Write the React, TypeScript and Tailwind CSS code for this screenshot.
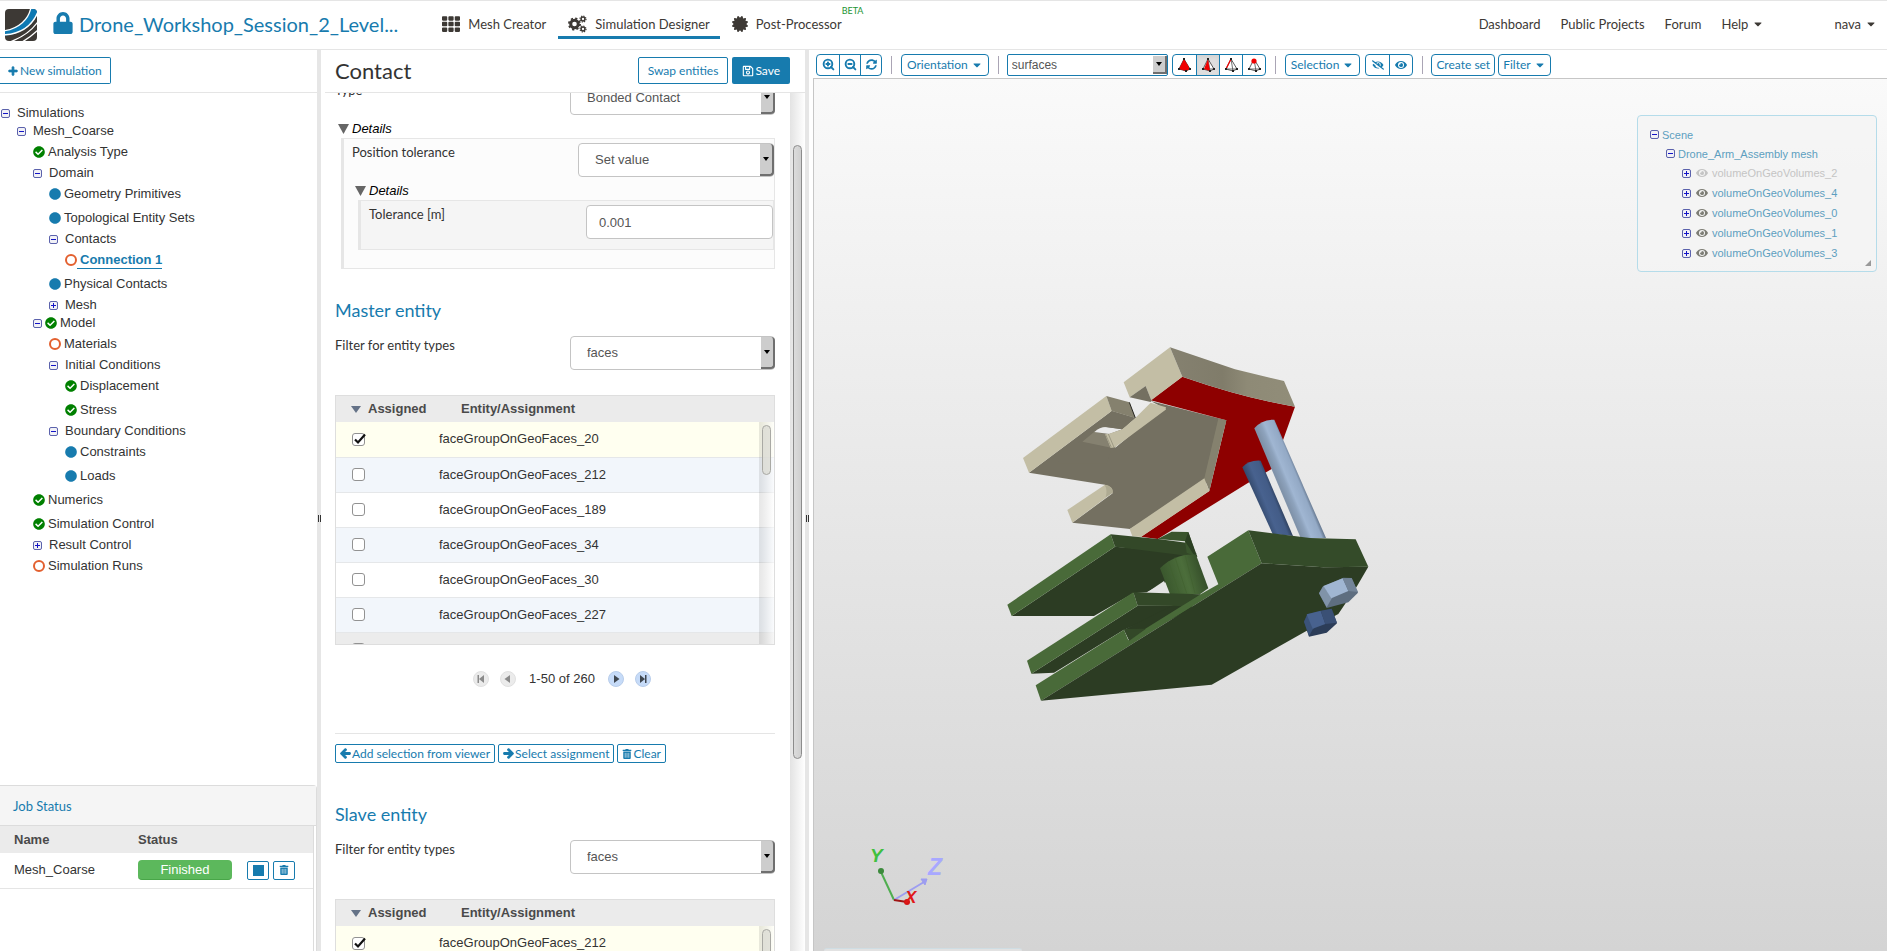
import { useState } from "react";
import type { ReactNode } from "react";
import clsx from "clsx";
import {
  FaArrowLeft,
  FaArrowRight,
  FaCaretDown,
  FaCertificate,
  FaCheckCircle,
  FaCircle,
  FaEye,
  FaEyeSlash,
  FaLock,
  FaPlus,
  FaRegSave,
  FaSyncAlt,
  FaTh,
  FaTrashAlt,
} from "react-icons/fa";
import { ZoomIn, ZoomOut } from "lucide-react";

type Status = "done" | "info" | "open";

type TreeItem = {
  label: string;
  level: number;
  toggle?: "open" | "closed";
  status?: Status;
  active?: boolean;
};

const tree: TreeItem[] = [
  { label: "Simulations", level: 0, toggle: "open" },
  { label: "Mesh_Coarse", level: 1, toggle: "open" },
  { label: "Analysis Type", level: 2, status: "done" },
  { label: "Domain", level: 2, toggle: "open" },
  { label: "Geometry Primitives", level: 3, status: "info" },
  { label: "Topological Entity Sets", level: 3, status: "info" },
  { label: "Contacts", level: 3, toggle: "open" },
  { label: "Connection 1", level: 4, status: "open", active: true },
  { label: "Physical Contacts", level: 3, status: "info" },
  { label: "Mesh", level: 3, toggle: "closed" },
  { label: "Model", level: 2, toggle: "open", status: "done" },
  { label: "Materials", level: 3, status: "open" },
  { label: "Initial Conditions", level: 3, toggle: "open" },
  { label: "Displacement", level: 4, status: "done" },
  { label: "Stress", level: 4, status: "done" },
  { label: "Boundary Conditions", level: 3, toggle: "open" },
  { label: "Constraints", level: 4, status: "info" },
  { label: "Loads", level: 4, status: "info" },
  { label: "Numerics", level: 2, status: "done" },
  { label: "Simulation Control", level: 2, status: "done" },
  { label: "Result Control", level: 2, toggle: "closed" },
  { label: "Simulation Runs", level: 2, status: "open" },
];

const indent = ["pl-px", "pl-[17px]", "pl-[33px]", "pl-[49px]", "pl-[65px]"];

const volumes = [
  { name: "volumeOnGeoVolumes_2", hidden: true },
  { name: "volumeOnGeoVolumes_4" },
  { name: "volumeOnGeoVolumes_0" },
  { name: "volumeOnGeoVolumes_1" },
  { name: "volumeOnGeoVolumes_3" },
];

const masterFaces = ["20", "212", "189", "34", "30", "227"];
const slaveFaces = ["212", "20", "189", "34", "30", "227"];

function ToggleBox({ state }: { state: "open" | "closed" }) {
  return (
    <svg viewBox="0 0 9 9" className="size-[9px] shrink-0" aria-hidden="true">
      <rect x="0.5" y="0.5" width="8" height="8" rx="1.5" fill="#f1f1f6" stroke="#5b62ac" />
      <path d="M2 4.5h5" stroke="#1414c8" />
      {state === "closed" && <path d="M4.5 2v5" stroke="#1414c8" />}
    </svg>
  );
}

function StatusIcon({ status }: { status: Status }) {
  if (status === "done") return <FaCheckCircle className="size-3 shrink-0 text-[#008000]" />;
  if (status === "info") return <FaCircle className="size-3 shrink-0 text-[#177bae]" />;
  return <span className="size-3 shrink-0 rounded-full border-2 border-[#e3602f]" />;
}

function TreeRow({ item }: { item: TreeItem }) {
  return (
    <li
      className={clsx(
        "flex items-center whitespace-nowrap",
        indent[item.level],
        item.toggle ? "h-[18px]" : "h-6"
      )}
    >
      {item.toggle && <ToggleBox state={item.toggle} />}
      {item.status && (
        <span className={clsx("flex", item.toggle && "ml-[3px]")}>
          <StatusIcon status={item.status} />
        </span>
      )}
      <a
        href="#"
        className={clsx(
          "leading-4",
          item.active && "border-b border-[#177bae] pl-[3px] font-bold text-[#177bae]",
          !item.active && (item.status ? "ml-[3px]" : "ml-[7px]")
        )}
      >
        {item.label}
      </a>
    </li>
  );
}

function Logo() {
  return (
    <svg viewBox="0 0 32 32" className="h-8 w-8" aria-label="SimScale">
      <defs>
        <clipPath id="logo-clip">
          <rect width="32" height="32" rx="4" />
        </clipPath>
      </defs>
      <g clipPath="url(#logo-clip)">
        <rect width="32" height="32" fill="#3d3935" />
        <path d="M26-2C24 10 14 20-2 22V27C18 25 29 15 34 2V-2Z" fill="#0d79b3" />
        <path d="M26-2C24 10 14 20-2 22" fill="none" stroke="#fff" strokeWidth="1.3" />
        <path d="M34 0C29 15 18 25-2 26" fill="none" stroke="#fff" strokeWidth="1.5" />
        <path d="M34 11C28 21 18 28 5 33" fill="none" stroke="#fff" strokeWidth="1.3" />
        <path d="M34 20C29 25 24 29 17 33" fill="none" stroke="#fff" strokeWidth="1.3" />
      </g>
    </svg>
  );
}

function GearsIcon({ className }: { className: string }) {
  return (
    <svg viewBox="0 0 19 18" className={className} fill="none" stroke="currentColor" aria-hidden="true">
      <circle cx="6.5" cy="9" r="3.800" strokeWidth="3" />
      <circle cx="6.5" cy="9" r="5.600" strokeWidth="1.800" strokeDasharray="2.200" />
      <circle cx="15" cy="4" r="1.900" strokeWidth="1.500" />
      <circle cx="15" cy="4" r="3" strokeWidth="1.200" strokeDasharray="1.180" />
      <circle cx="15" cy="14" r="1.900" strokeWidth="1.500" />
      <circle cx="15" cy="14" r="3" strokeWidth="1.200" strokeDasharray="1.180" />
    </svg>
  );
}

const tabLink = "flex h-8 items-center border-b-3 pt-1";

function Header() {
  return (
    <header className="flex h-[50px] shrink-0 items-center border-y border-[#e5e5e5] pr-2.5 pl-[5px] font-[Lato,sans-serif] text-[#3d3935]">
      <a href="#">
        <Logo />
      </a>
      <FaLock className="-mt-1 ml-4 h-[22px] w-5 text-[#177bae]" />
      <h1 className="-mt-0.5 ml-1.5 text-xl leading-7 text-[#177bae]">Drone_Workshop_Session_2_Level...</h1>
      <nav className="-mt-1 ml-9 flex h-8 items-center leading-5">
        <a href="#" className={clsx(tabLink, "border-transparent px-2")}>
          <FaTh className="mr-2 size-[18px]" />
          Mesh Creator
        </a>
        <a href="#" className={clsx(tabLink, "ml-1 border-[#177bae] px-2.5")}>
          <GearsIcon className="mr-2 h-[18px] w-[19px]" />
          Simulation Designer
        </a>
        <a href="#" className={clsx(tabLink, "relative ml-0.5 border-transparent px-2.5")}>
          <FaCertificate className="mr-2 size-4" />
          Post-Processor
          <sup className="absolute -top-0.5 left-full -ml-2.5 text-[9px] leading-3 text-[#1d9434]">BETA</sup>
        </a>
      </nav>
      <nav className="-mt-0.5 ml-auto flex items-center gap-5 leading-5">
        <a href="#">Dashboard</a>
        <a href="#">Public Projects</a>
        <a href="#">Forum</a>
        <a href="#" className="flex items-center gap-1">
          Help <FaCaretDown className="size-3" />
        </a>
        <a href="#" className="ml-[50px] flex items-center gap-1">
          nava <FaCaretDown className="size-3" />
        </a>
      </nav>
    </header>
  );
}

function Splitter() {
  return (
    <div className="flex w-1 shrink-0 items-center justify-center gap-px bg-[#e6e6e6]">
      <span className="mt-9 h-[7px] w-px bg-[#333]" />
      <span className="mt-9 h-[7px] w-px bg-[#333]" />
    </div>
  );
}

const jobButton = "flex h-[19px] w-[22px] items-center justify-center rounded-xs border border-[#177bae] text-[#177bae]";

function JobStatus() {
  return (
    <section className="h-[166px] shrink-0 rounded-tr border-t border-r border-[#dcdcdc]">
      <h2 className="h-10 border-b border-[#dcdcdc] bg-[#f5f5f5] pl-[13px] font-[Lato,sans-serif] leading-10 text-[#177bae]">
        Job Status
      </h2>
      <div className="mr-0.5 h-[125px] border-r border-[#dcdcdc]">
        <table className="w-full text-left">
          <thead className="bg-[#ebebeb] text-[#4a4a4a]">
            <tr className="h-[27px]">
              <th className="w-[138px] pl-3.5">Name</th>
              <th className="w-[109px]">Status</th>
              <th aria-label="Actions" />
            </tr>
          </thead>
          <tbody>
            <tr className="h-[35px] border-b border-[#e5e5e5]">
              <td className="pl-3.5">Mesh_Coarse</td>
              <td>
                <span className="block h-5 w-[94px] rounded border-b border-[#48a648] bg-[#5cb85c] text-center leading-5 text-white">
                  Finished
                </span>
              </td>
              <td>
                <div className="flex gap-1">
                  <button aria-label="Stop" className={jobButton}>
                    <span className="size-[11px] bg-[#177bae]" />
                  </button>
                  <button aria-label="Delete" className={jobButton}>
                    <FaTrashAlt className="size-2.5" />
                  </button>
                </div>
              </td>
            </tr>
          </tbody>
        </table>
      </div>
    </section>
  );
}

function Sidebar() {
  return (
    <aside className="flex w-[317px] shrink-0 flex-col">
      <div className="h-[43px] shrink-0 border-b border-[#e5e5e5] pt-[7px]">
        <button className="flex h-[27px] items-center gap-0.5 rounded-r-xs border border-l-0 border-[#177bae] pr-2 pl-2 font-[Lato,sans-serif] text-xs text-[#177bae]">
          <FaPlus className="size-2.5 stroke-current stroke-[40]" />
          New simulation
        </button>
      </div>
      <ul className="flex-1 overflow-hidden pt-[11px]">
        {tree.map((item) => (
          <TreeRow key={item.label} item={item} />
        ))}
      </ul>
      <JobStatus />
    </aside>
  );
}

function SelectBox({ id, value, className }: { id: string; value: string; className: string }) {
  return (
    <div className={clsx("relative h-[34px]", className)}>
      <select
        id={id}
        defaultValue={value}
        className="h-full w-full appearance-none rounded-sm border border-[#c4c4c4] bg-white pl-4 text-[#555]"
      >
        <option>{value}</option>
      </select>
      <span className="pointer-events-none absolute inset-y-px right-0 flex w-3.5 items-center justify-center rounded-r-sm border-r-2 border-b-2 border-[#6f6f6f] bg-[#cdcdcd]">
        <svg viewBox="0 0 6 4" className="h-1 w-1.5">
          <path d="M0 0h6L3 4Z" />
        </svg>
      </span>
    </div>
  );
}

function FieldRow({ label, id, children }: { label: string; id: string; children: ReactNode }) {
  return (
    <div className="flex items-start justify-between">
      <label htmlFor={id} className="font-[Lato,sans-serif] leading-[18px]">
        {label}
      </label>
      {children}
    </div>
  );
}

function DetailsGroup({ children, className }: { children: ReactNode; className?: string }) {
  return (
    <fieldset>
      <legend className="flex h-5 items-center gap-[3px] pt-0.5 pl-[3px] text-black italic">
        <svg viewBox="0 0 11 10" className="h-2.5 w-[11px]">
          <path d="M0 0h11L5.500 10Z" fill="#666" />
        </svg>
        Details
      </legend>
      <div className={clsx("ml-1.5 border border-l-3 border-[#e6e6e6] pl-2", className)}>{children}</div>
    </fieldset>
  );
}

function CheckBox({ checked, label }: { checked: boolean; label: string }) {
  const [on, setOn] = useState(checked);
  return (
    <span className="relative block size-[13px]">
      <input
        type="checkbox"
        aria-label={label}
        checked={on}
        onChange={() => setOn(!on)}
        className="block size-[13px] appearance-none rounded-[3px] border border-[#929292] bg-white"
      />
      {on && (
        <svg viewBox="0 0 14 13" className="pointer-events-none absolute top-0 left-px h-[13px] w-3.5">
          <path d="M2 6.500 5 9.500 12 1.500" fill="none" stroke="#111" strokeWidth="2.200" />
        </svg>
      )}
    </span>
  );
}

function PageButton({ label, disabled, path }: { label: string; disabled?: boolean; path: string }) {
  return (
    <button aria-label={label} disabled={disabled} className="size-4">
      <svg viewBox="0 0 16 16">
        <circle cx="8" cy="8" r="7.500" fill={disabled ? "#ebebeb" : "#c6dbf8"} stroke={disabled ? "#e0e0e0" : "#b8cdea"} />
        <path d={path} fill={disabled ? "#8a8a8a" : "#3f4750"} />
      </svg>
    </button>
  );
}

const smallButton =
  "flex h-[19px] items-center gap-px rounded-xs border border-[#177bae] px-1 font-[Lato,sans-serif] text-xs text-[#177bae]";

function EntitySection({ title, id, faces }: { title: string; id: string; faces: string[] }) {
  return (
    <section className="h-[504px] shrink-0">
      <h3 className="mb-3.5 font-[Lato,sans-serif] text-lg leading-6 text-[#177bae]">{title}</h3>
      <FieldRow label="Filter for entity types" id={id}>
        <SelectBox id={id} value="faces" className="w-[205px]" />
      </FieldRow>
      <div className="relative mt-[25px] h-[250px] overflow-hidden border border-[#dedede]">
        <table className="w-full text-left">
          <thead className="bg-[#ebebeb] text-[#4a4a4a]">
            <tr className="h-[26px]">
              <th className="w-[103px] pl-[15px] whitespace-nowrap">
                <span className="flex items-center gap-[7px]">
                  <svg viewBox="0 0 10 7" className="h-[7px] w-2.5">
                    <path d="M0 0h10L5 7Z" fill="#647287" />
                  </svg>
                  Assigned
                </span>
              </th>
              <th className="pl-[22px]">Entity/Assignment</th>
            </tr>
          </thead>
          <tbody>
            {faces.map((face, i) => (
              <tr
                key={face}
                className={clsx(
                  "h-[35px] border-b border-[#e5e7e9]",
                  i === 0 ? "bg-[#fffff0]" : i % 2 ? "bg-[#f2f6fb]" : "bg-white"
                )}
              >
                <td className="pl-4">
                  <CheckBox checked={i === 0} label={"Assign face " + face} />
                </td>
                <td>faceGroupOnGeoFaces_{face}</td>
              </tr>
            ))}
            <tr className="h-[35px] bg-[#ececec]">
              <td className="pl-4">
                <CheckBox checked={false} label="Assign next face" />
              </td>
              <td />
            </tr>
          </tbody>
        </table>
        <div className="absolute top-[26px] right-0 bottom-0 w-[15px] bg-linear-to-r from-black/8 to-white/60 pt-[3px] pl-[3px]">
          <div className="h-[50px] w-[9px] rounded-full border border-[#a9a9a4] bg-[#dcdcd4]/80" />
        </div>
      </div>
      <div className="mt-[26px] flex h-4 items-center justify-center gap-[11px] pl-3.5">
        <PageButton label="First page" disabled path="M4.500 4H6v8H4.500ZM11 4v8L6 8Z" />
        <PageButton label="Previous page" disabled path="M10 4v8L4.500 8Z" />
        <span className="px-0.5 leading-4">1-50 of 260</span>
        <PageButton label="Next page" path="M6 4v8L11.500 8Z" />
        <PageButton label="Last page" path="M10 4h1.500v8H10ZM5 4v8L10 8Z" />
      </div>
      <hr className="mt-[46px] border-[#e5e5e5]" />
      <div className="mt-2.5 flex gap-[3px]">
        <button className={smallButton}>
          <FaArrowLeft className="size-[11px] stroke-current stroke-[50]" />
          Add selection from viewer
        </button>
        <button className={smallButton}>
          <FaArrowRight className="size-[11px] stroke-current stroke-[50]" />
          Select assignment
        </button>
        <button className={smallButton}>
          <FaTrashAlt className="size-2.5" />
          Clear
        </button>
      </div>
    </section>
  );
}

function ContactPanel() {
  return (
    <section className="flex w-[484px] shrink-0 flex-col pl-1">
      <div className="flex h-[43px] shrink-0 items-center gap-1 border-b border-[#e5e5e5] pr-[15px] pb-px pl-2.5 font-[Lato,sans-serif] text-xs">
        <h2 className="mr-auto text-[22px] leading-7 text-[#333]">Contact</h2>
        <button className="h-[27px] rounded-xs border border-[#177bae] px-[9px] text-[#177bae]">Swap entities</button>
        <button className="flex h-[27px] items-center gap-px rounded-xs bg-[#177bae] px-2.5 text-white">
          <FaRegSave className="size-3" />
          Save
        </button>
      </div>
      <div className="flex min-h-0 flex-1">
        <form className="flex min-w-0 flex-1 flex-col overflow-hidden pr-[15px] pl-2.5">
          <div className="-mt-3 h-[217px] shrink-0">
            <FieldRow label="Type" id="type">
              <SelectBox id="type" value="Bonded Contact" className="w-[205px]" />
            </FieldRow>
            <div className="h-[3px]" />
            <DetailsGroup className="h-[131px] bg-[#fcfcfc] pt-1">
              <FieldRow label="Position tolerance" id="position">
                <SelectBox id="position" value="Set value" className="w-[196px]" />
              </FieldRow>
              <div className="h-[3px]" />
              <DetailsGroup className="h-[50px] bg-[#f5f5f5] pt-1">
                <FieldRow label="Tolerance [m]" id="tolerance">
                  <input
                    id="tolerance"
                    defaultValue="0.001"
                    className="h-[34px] w-[187px] rounded-sm border border-[#c4c4c4] bg-white pl-3 text-[#555]"
                  />
                </FieldRow>
              </DetailsGroup>
            </DetailsGroup>
          </div>
          <EntitySection title="Master entity" id="master-filter" faces={masterFaces} />
          <EntitySection title="Slave entity" id="slave-filter" faces={slaveFaces} />
        </form>
        <div className="w-[15px] shrink-0 bg-linear-to-r from-[#e3e3e3] to-white pt-[52px] pl-[3px]">
          <div className="h-[614px] w-[9px] rounded-full border border-[#8c8c8c] bg-linear-to-r from-[#dcdcdc] to-[#cfcfcf]" />
        </div>
      </div>
    </section>
  );
}

function Separator() {
  return <span className="mx-[9px] h-[18px] w-px bg-[#aaa5b5]" />;
}

const toolButton = "flex h-[22px] items-center justify-center rounded-sm border border-[#177bae]";
const groupButton = "flex w-[23px] items-center justify-center border-l border-[#177bae] first:border-l-0";

function PickIcon({ mode }: { mode: "volume" | "face" | "edge" | "vertex" }) {
  return (
    <svg viewBox="0 0 14 14" className="size-3.5">
      <path d="M7 1 2 11l7 2 4-2Z" fill={mode === "volume" ? "#f00000" : "#fff"} stroke="#333" strokeWidth="0.800" />
      <path d="M7 1 9 13M2 11l11 0" stroke="#333" strokeWidth="0.700" fill="none" />
      {mode === "volume" && <path d="M7 1 2 11l7 2 4-2Z" fill="#f00000" />}
      {mode === "face" && <path d="M7 1 3 11l6 2Z" fill="#f00000" />}
      {mode === "edge" && <path d="M7 1 2 11" stroke="#f00000" strokeWidth="1.200" />}
      {mode === "vertex" && <circle cx="7" cy="3" r="2.600" fill="#f00000" />}
      <path d="M1 10h2v2H1ZM8 12h2v2H8ZM12 10h2v2h-2Z" fill="#222" />
      {mode !== "vertex" && <path d="M6 0h2v2H6Z" fill="#222" />}
    </svg>
  );
}

function Toolbar() {
  return (
    <div className="flex h-7 shrink-0 items-center pt-px pl-[3px] font-[Lato,sans-serif] text-xs text-[#177bae]">
      <div className={toolButton}>
        <button aria-label="Zoom in" className="flex w-[22px] justify-center">
          <ZoomIn className="size-[13px]" strokeWidth={3.5} />
        </button>
        <button aria-label="Zoom out" className="flex h-full w-[22px] items-center justify-center border-x border-[#177bae]">
          <ZoomOut className="size-[13px]" strokeWidth={3.5} />
        </button>
        <button aria-label="Reset view" className="flex w-5 justify-center">
          <FaSyncAlt className="size-[11px]" />
        </button>
      </div>
      <Separator />
      <button className={clsx(toolButton, "gap-[3px] px-[5px]")}>
        Orientation <FaCaretDown className="size-3" />
      </button>
      <Separator />
      <div className="relative -ml-px h-[22px] w-[161px]">
        <select
          aria-label="Selection target"
          className="h-full w-full appearance-none rounded-xs border border-[#177bae] bg-white pl-1 font-['Liberation_Sans',Arial,sans-serif] leading-5 text-[#555]"
        >
          <option>surfaces</option>
        </select>
        <span className="pointer-events-none absolute inset-y-0.5 right-px flex w-3.5 items-center justify-center border-r-2 border-b-2 border-[#6f6f6f] bg-[#cdcdcd]">
          <svg viewBox="0 0 6 4" className="h-1 w-1.5">
            <path d="M0 0h6L3 4Z" />
          </svg>
        </span>
      </div>
      <div className="ml-1 flex h-[22px] overflow-hidden rounded-sm border border-[#177bae]">
        <button aria-label="Pick volumes" className={groupButton}>
          <PickIcon mode="volume" />
        </button>
        <button aria-label="Pick faces" className={clsx(groupButton, "bg-[#dedede] shadow-inner")}>
          <PickIcon mode="face" />
        </button>
        <button aria-label="Pick edges" className={groupButton}>
          <PickIcon mode="edge" />
        </button>
        <button aria-label="Pick vertices" className={groupButton}>
          <PickIcon mode="vertex" />
        </button>
      </div>
      <Separator />
      <button className={clsx(toolButton, "gap-[3px] px-[5px]")}>
        Selection <FaCaretDown className="size-3" />
      </button>
      <div className="ml-[5px] flex h-[22px] rounded-sm border border-[#177bae]">
        <button aria-label="Hide selection" className={groupButton}>
          <FaEyeSlash className="size-3" />
        </button>
        <button aria-label="Show all" className={groupButton}>
          <FaEye className="size-3" />
        </button>
      </div>
      <Separator />
      <button className={clsx(toolButton, "-ml-px px-1")}>Create set</button>
      <button className={clsx(toolButton, "ml-[3px] gap-[3px] px-1")}>
        Filter <FaCaretDown className="size-3" />
      </button>
    </div>
  );
}

function DroneArm() {
  return (
    <svg viewBox="0 0 1200 1170" className="absolute top-[251px] left-[176px] h-[390px] w-[400px]" role="img" aria-label="Drone arm assembly">
      <defs>
        <linearGradient id="tan-top">
          <stop offset="0" stopColor="#858170" />
          <stop offset="0.420" stopColor="#807c6a" />
          <stop offset="0.620" stopColor="#8e8a76" />
          <stop offset="1" stopColor="#918d79" />
        </linearGradient>
        <linearGradient id="pin" gradientUnits="userSpaceOnUse" x1="520" y1="750" x2="650" y2="710">
          <stop offset="0" stopColor="#3a572d" />
          <stop offset="0.500" stopColor="#4c6e3b" />
          <stop offset="1" stopColor="#304726" />
        </linearGradient>
        <linearGradient id="bolt-dark" gradientUnits="userSpaceOnUse" x1="800" y1="515" x2="862" y2="490">
          <stop offset="0" stopColor="#344a6d" />
          <stop offset="0.350" stopColor="#48628f" />
          <stop offset="0.750" stopColor="#435c87" />
          <stop offset="1" stopColor="#273751" />
        </linearGradient>
        <linearGradient id="bolt-light" gradientUnits="userSpaceOnUse" x1="865" y1="455" x2="930" y2="428">
          <stop offset="0" stopColor="#8093aa" />
          <stop offset="0.250" stopColor="#8ea3bd" />
          <stop offset="0.400" stopColor="#a0b6d2" />
          <stop offset="0.800" stopColor="#93a9c5" />
          <stop offset="1" stopColor="#53647a" />
        </linearGradient>
      </defs>

      {/* upper clamp */}
      <path d="M117 428 365 243 436 264 397 298 375 354 500 250 528 238 482 213 709 271 650 460 420 597 247 578 368 490 345 464Z" fill="#747061" />
      <path d="M365 243 436 264 397 298 340 291 313 305 277 335 365 354 350 400 200 400Z" fill="#747061" />
      <path d="M99 384 349 198 365 243 117 428Z" fill="#c3bea5" />
      <path d="M349 198 418 217 436 264 365 243Z" fill="#85816e" />
      <path d="M418 217 436 264" stroke="#24231e" strokeWidth="3" />
      <path d="M277 335 313 305 345 312 368 354Z" fill="#858170" />
      <path d="M313 306Q330 290 350 291L397 298 358 312Z" fill="#eaeaea" />
      <path d="M345 291 436 264 397 298Z" fill="#747061" />
      <path d="M345 313 358 311 397 298 436 264 482 218 528 232 526 240 375 352 362 354Z" fill="#c3bea5" />
      <path d="M355 312 372 352M347 314 364 352" stroke="#9d9984" strokeWidth="3" />
      <path d="M232 540 345 464Q370 468 368 488L247 578Z" fill="#c3bea5" />
      <path d="M344 465Q353 480 347 502L368 488Q370 468 344 465Z" fill="#aeaa92" />
      <path d="M577 140Q765 205 915 230L880 328 845 417 770 461 503 627 453 620 658 483 709 271 482 211Z" fill="#8e0000" />
      <path d="M685 266 709 271 658 483 643 445Z" fill="#85816e" />
      <path d="M643 445 658 483 453 621 427 619 419 597Z" fill="#c3bea5" />
      <path d="M401 157 540 52 577 140 484 211 467 168 419 202Z" fill="#c3bea5" />
      <path d="M419 202 467 168 484 211 482 216Z" fill="#747061" />
      <path d="M540 52 735 118 882 153 915 230Q765 205 577 140Z" fill="url(#tan-top)" />

      {/* lower clamp, rear plate and pin */}
      <path d="M65 858 375 650 620 670 530 755 470 787 430 790 312 858Z" fill="#2c3c23" />
      <path d="M52 824 362 613 375 650 65 858Z" fill="#496a39" />
      <path d="M362 613 505 627 600 640 622 681 375 650Z" fill="#334828" />
      <path d="M503 627 545 605 595 606 620 680 590 668 585 634Z" fill="#3a552d" />
      <path d="M595 606 622 680 610 672 585 634Z" fill="#2b3f22" />
      <path d="M472 787 522 753 540 792Z" fill="#e3e3e3" />
      <path d="M510 715Q555 670 618 674L655 775 630 793 540 793Z" fill="url(#pin)" />
      <path d="M555 682 590 790M585 674 615 790M535 694 568 790" stroke="#41602f" strokeWidth="2" />

      {/* lower clamp, middle plate */}
      <path d="M124 1031 443 827 577 827 402 899 192 1028Z" fill="#2c3c23" />
      <path d="M402 899 560 820 632 793 600 840 470 905 418 932Z" fill="#2c3c23" />
      <path d="M111 992 430 787 443 827 124 1031Z" fill="#496a39" />
      <path d="M430 787 632 793 577 828 443 827Z" fill="#334828" />

      {/* bolts */}
      <path d="M757 412Q775 390 812 392L909 618 848 612Z" fill="url(#bolt-dark)" />
      <path d="M793 295Q815 268 853 269L1008 624 932 624Z" fill="url(#bolt-light)" />

      {/* lower clamp, front plate */}
      <path d="M137 1066 402 899 415 931 466 896 632 793 685 763 652 680 775 601 815 700 153 1112Z" fill="#496a39" />
      <path d="M402 897 468 896 418 932Z" fill="#334828" />
      <path d="M153 1112 815 700 1000 712 1135 710 1100 770 1045 852 945 905 665 1064Z" fill="#2c3c23" />
      <path d="M775 601 960 624 1097 628 1135 710 1000 712 815 700Z" fill="#344b29" />

      {/* nuts */}
      <path d="M987 790 998 770 1060 743 1085 744 1104 788 1075 817 1010 834Z" fill="#5e6e80" />
      <path d="M987 790 1000 768 1026 804 1010 832Z" fill="#8093a8" />
      <path d="M1000 768 1058 745 1075 783 1024 805Z" fill="#a0b6d2" />
      <path d="M1058 745 1085 744 1104 786 1075 783Z" fill="#738498" />
      <path d="M942 875 953 852 1025 836 1041 880 1010 908 957 920Z" fill="#2c3d58" />
      <path d="M942 875 952 852 970 895 957 918Z" fill="#3b5379" />
      <path d="M950 853 992 842 1006 882 968 896Z" fill="#48628f" />
      <path d="M992 842 1025 836 1041 878 1006 882Z" fill="#3a5075" />
    </svg>
  );
}

function AxisTriad() {
  return (
    <svg viewBox="0 0 80 64" className="absolute bottom-[42px] left-[53px] h-16 w-20" role="img" aria-label="Axes">
      <path d="M27 55 14 27" stroke="#4fae4f" strokeWidth="2" />
      <circle cx="14" cy="26" r="3" fill="#3c8a3c" />
      <path d="M27 55 57 37" stroke="#9d9df0" strokeWidth="2" />
      <path d="M54 34h6l-2 6Z" fill="#9d9df0" stroke="#9d9df0" />
      <path d="M27 55 40 57" stroke="#a01414" strokeWidth="2" />
      <circle cx="40" cy="57" r="3" fill="#d41414" />
      <g className="font-['Liberation_Sans',Arial,sans-serif] font-bold italic">
        <text x="3" y="17" fontSize="19" fill="#3fc03f">Y</text>
        <text x="61" y="30" fontSize="23" fill="#a8a8ff">Z</text>
        <text x="38" y="58" fontSize="17" fill="#e01818">X</text>
      </g>
    </svg>
  );
}

function ScenePanel() {
  return (
    <div className="absolute top-9 right-2.5 h-[157px] w-60 rounded-sm border border-[#b5dcea] bg-[#f4f4f4]/80 pt-[9px] pl-3 text-[11px] text-[#5d9fc0]">
      <ul>
        <li className="flex h-[19px] items-center gap-[3px]">
          <ToggleBox state="open" />
          Scene
        </li>
        <li className="flex h-[19px] items-center gap-[3px] pl-4">
          <ToggleBox state="open" />
          Drone_Arm_Assembly mesh
        </li>
        {volumes.map((volume) => (
          <li key={volume.name} className={clsx("flex h-5 items-center pl-8", volume.hidden && "text-[#c4c4c4]")}>
            <ToggleBox state="closed" />
            <FaEye className={clsx("mr-1 ml-[5px] size-3", volume.hidden ? "text-[#c4c4c4]" : "text-[#7d7d75]")} />
            {volume.name}
          </li>
        ))}
      </ul>
      <svg viewBox="0 0 6 6" className="absolute right-[5px] bottom-[5px] size-1.5">
        <path d="M6 0v6H0Z" fill="#999" />
      </svg>
    </div>
  );
}

function Viewer() {
  return (
    <main className="flex min-w-0 flex-1 flex-col pl-1">
      <Toolbar />
      <div className="relative flex-1 overflow-hidden border-t border-l border-[#c6c6c6] bg-linear-to-b from-[#fafafa] to-[#d4d4d4]">
        <DroneArm />
        <ScenePanel />
        <AxisTriad />
        <div className="absolute bottom-0 left-2.5 h-[3px] w-[198px] rounded-t-sm border-t border-[#cfdde3] bg-[#e2e2e2]" />
      </div>
    </main>
  );
}

export default function App() {
  return (
    <div className="flex h-screen flex-col overflow-hidden bg-white font-['Liberation_Sans',Arial,sans-serif] text-[13px] leading-4 text-[#333]">
      <Header />
      <div className="flex min-h-0 flex-1">
        <Sidebar />
        <Splitter />
        <ContactPanel />
        <Splitter />
        <Viewer />
      </div>
    </div>
  );
}
